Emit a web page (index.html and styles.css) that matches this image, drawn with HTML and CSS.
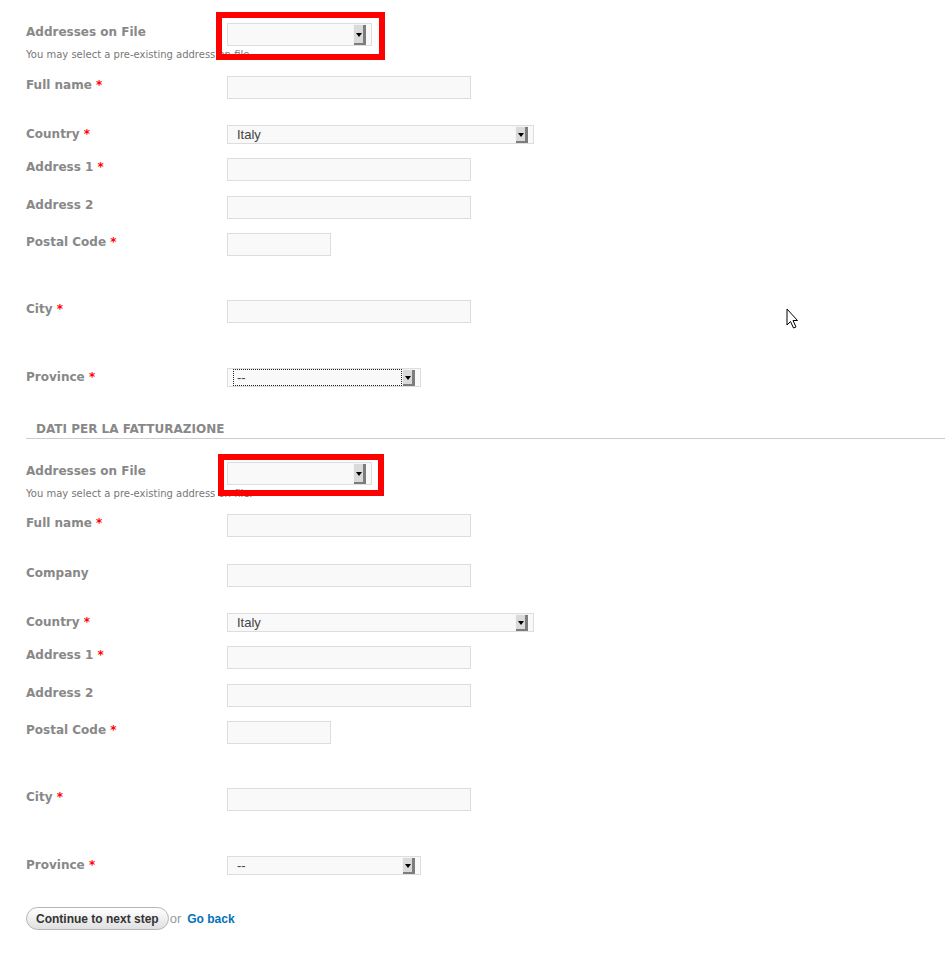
FILE: index.html
```html
<!DOCTYPE html>
<html lang="en">
<head>
  <meta charset="UTF-8" />
  <meta name="viewport" content="width=device-width, initial-scale=1.0"/>
  <link rel="stylesheet" href="styles.css">
</head>
<body>
  <div class="checkout">

    <!-- delivery -->
    <div class="form-item has-desc">
      <label>Addresses on File</label>
      <div class="select select-tall select-narrow">
        <span class="select-value"></span>
        <span class="select-btn"><i></i></span>
      </div>
      <span class="highlight"></span>
    </div>
    <div class="description">You may select a pre-existing address on file.</div>

    <div class="form-item spaced">
      <label>Full name <span class="required">*</span></label>
      <input type="text" class="form-text">
    </div>

    <div class="form-item">
      <label>Country <span class="required">*</span></label>
      <div class="select select-wide">
        <span class="select-value">Italy</span>
        <span class="select-btn"><i></i></span>
      </div>
    </div>

    <div class="form-item street">
      <label>Address 1 <span class="required">*</span></label>
      <input type="text" class="form-text">
    </div>

    <div class="form-item">
      <label>Address 2</label>
      <input type="text" class="form-text">
    </div>

    <div class="form-item loose">
      <label>Postal Code <span class="required">*</span></label>
      <input type="text" class="form-text short">
    </div>

    <div class="form-item looser">
      <label>City <span class="required">*</span></label>
      <input type="text" class="form-text">
    </div>

    <div class="form-item">
      <label>Province <span class="required">*</span></label>
      <div class="select select-mid">
        <span class="select-value focused">--</span>
        <span class="select-btn"><i></i></span>
      </div>
    </div>

    <!-- billing -->
    <h3 class="pane-title">DATI PER LA FATTURAZIONE</h3>

    <div class="form-item has-desc">
      <label>Addresses on File</label>
      <div class="select select-tall select-narrow">
        <span class="select-value"></span>
        <span class="select-btn"><i></i></span>
      </div>
      <span class="highlight highlight-billing"></span>
    </div>
    <div class="description tight">You may select a pre-existing address on file.</div>

    <div class="form-item spaced wider">
      <label>Full name <span class="required">*</span></label>
      <input type="text" class="form-text">
    </div>

    <div class="form-item spaced">
      <label>Company</label>
      <input type="text" class="form-text">
    </div>

    <div class="form-item">
      <label>Country <span class="required">*</span></label>
      <div class="select select-wide">
        <span class="select-value">Italy</span>
        <span class="select-btn"><i></i></span>
      </div>
    </div>

    <div class="form-item street">
      <label>Address 1 <span class="required">*</span></label>
      <input type="text" class="form-text">
    </div>

    <div class="form-item">
      <label>Address 2</label>
      <input type="text" class="form-text">
    </div>

    <div class="form-item loose">
      <label>Postal Code <span class="required">*</span></label>
      <input type="text" class="form-text short">
    </div>

    <div class="form-item looser">
      <label>City <span class="required">*</span></label>
      <input type="text" class="form-text">
    </div>

    <div class="form-item">
      <label>Province <span class="required">*</span></label>
      <div class="select select-mid">
        <span class="select-value">--</span>
        <span class="select-btn"><i></i></span>
      </div>
    </div>

    <div class="actions">
      <button class="btn">Continue to next step</button>
      <span class="or">or</span>
      <a href="#" class="back">Go back</a>
    </div>

    <svg class="cursor" width="14" height="21" viewBox="0 0 14 21">
      <polygon points="1,1 1,17 4.5,13.5 7.5,20 10,19 7,12.5 11.5,12.5" fill="#fff" stroke="#000" stroke-width="1" stroke-linejoin="miter"/>
    </svg>
  </div>
</body>
</html>
```

FILE: styles.css
```css
body {
  margin: 0;
  font-family: "DejaVu Sans", Verdana, sans-serif;
  background-color: #fff;
  color: #888;
}

.checkout {
  position: relative;
  padding: 23px 0 0 26px;
}

.form-item {
  position: relative;
  display: flex;
  align-items: flex-start;
  margin-bottom: 14px;
}

.form-item.street {
  margin-bottom: 15px;
}

.form-item.spaced {
  margin-bottom: 26px;
}

.form-item.wider {
  margin-bottom: 27px;
}

.form-item.loose {
  margin-bottom: 44px;
}

.form-item.looser {
  margin-bottom: 45px;
}

.form-item.has-desc {
  margin-bottom: 2px;
}

.form-item label {
  width: 201px;
  flex-shrink: 0;
  padding-top: 1px;
  font-size: 12px;
  font-weight: bold;
  line-height: 16px;
  color: #888;
}

.required {
  color: #f00;
}

.description {
  font-size: 10px;
  line-height: 13px;
  color: #777;
  margin-bottom: 15px;
}

.description.tight {
  margin-bottom: 14px;
}

.form-text {
  box-sizing: border-box;
  width: 244px;
  height: 23px;
  margin: 0;
  padding: 0 4px;
  border: 1px solid #ddd;
  background-color: #f9f9f9;
  font: 13px "Liberation Sans", Arial, sans-serif;
}

.form-text.short {
  width: 104px;
}

/* old-style dropdowns */
.select {
  box-sizing: border-box;
  display: flex;
  height: 19px;
  border: 1px solid #ddd;
  background-color: #f9f9f9;
}

.select-tall {
  height: 23px;
}

.select-wide {
  width: 307px;
}

.select-mid {
  width: 194px;
}

.select-narrow {
  width: 145px;
}

.select-value {
  flex: 1;
  box-sizing: border-box;
  margin-left: 5px;
  padding-left: 4px;
  font: 13px/17px "Liberation Sans", Arial, sans-serif;
  color: #444;
}

.select-value.focused {
  border: 1px dotted #222;
  padding-left: 3px;
  line-height: 15px;
}

.select-btn {
  box-sizing: border-box;
  width: 13px;
  margin-right: 5px;
  padding-right: 3px;
  display: flex;
  align-items: center;
  justify-content: center;
  background-color: #dadada;
  border-top: 1px solid #f4f4f4;
  border-left: 1px solid #f4f4f4;
  box-shadow: inset -3px -2px 0 #7d7d7d;
}

.select-btn i {
  width: 0;
  height: 0;
  margin-bottom: 1px;
  border-left: 3px solid transparent;
  border-right: 3px solid transparent;
  border-top: 4px solid #000;
}

.highlight {
  position: absolute;
  left: 190px;
  top: -11px;
  width: 169px;
  height: 48px;
  box-sizing: border-box;
  border: 6px solid #f00;
}

.highlight-billing {
  left: 192px;
  top: -8px;
  width: 166px;
  height: 42px;
}

.pane-title {
  margin: 35px 0 23px;
  padding: 0 0 2px 10px;
  border-bottom: 1px solid #ccc;
  font-size: 12px;
  font-weight: bold;
  line-height: 14px;
  color: #888;
}

.actions {
  display: flex;
  align-items: center;
  margin-top: 32px;
}

.btn {
  box-sizing: border-box;
  height: 23px;
  padding: 0 9px;
  border: 1px solid #b5b5b5;
  border-radius: 12px;
  background: linear-gradient(#fff, #e0e0e0);
  font: bold 12px "Liberation Sans", Arial, sans-serif;
  color: #333;
}

.or {
  margin-left: 1px;
  font: 13px "Liberation Sans", Arial, sans-serif;
  color: #999;
}

.back {
  margin-left: 6px;
  font: bold 12px "Liberation Sans", Arial, sans-serif;
  color: #0073bb;
  text-decoration: none;
}

.cursor {
  position: absolute;
  left: 786px;
  top: 308px;
}
```
